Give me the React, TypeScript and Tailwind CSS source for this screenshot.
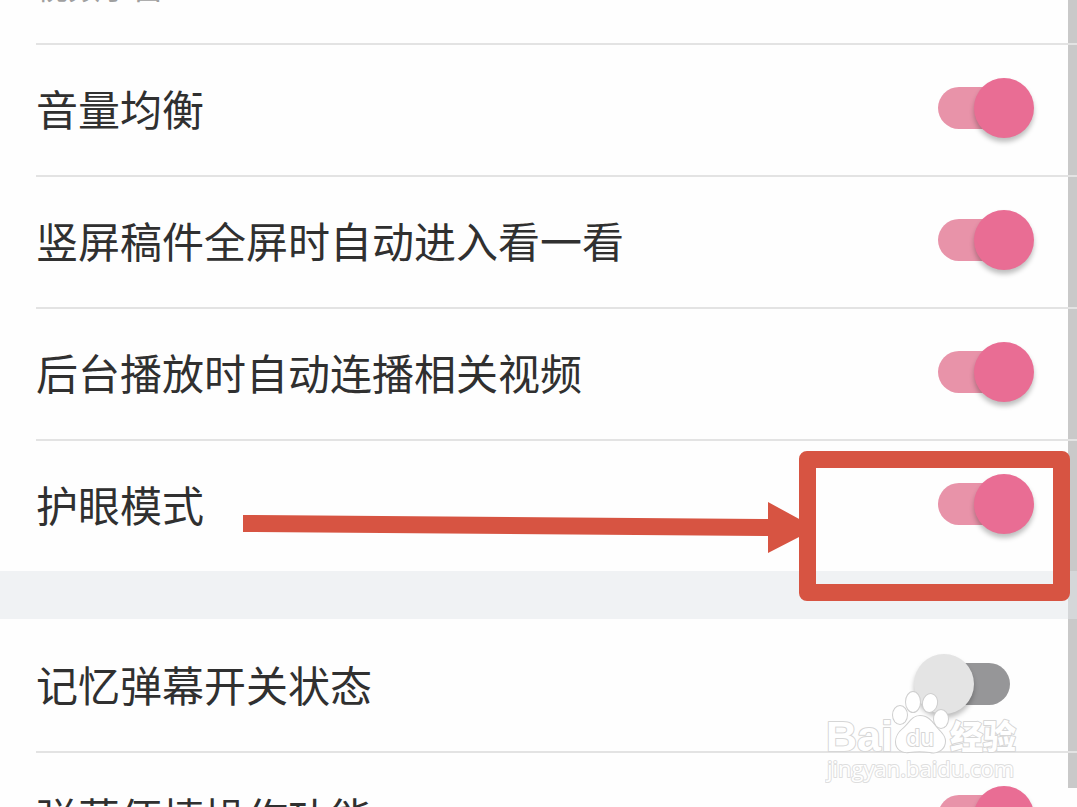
import React, { useState } from 'react';

interface SettingItem {
  id: string;
  label: string;
  defaultOn: boolean;
}

const playbackSettings: SettingItem[] = [
  { id: 'volume', label: '音量均衡', defaultOn: true },
  { id: 'portrait', label: '竖屏稿件全屏时自动进入看一看', defaultOn: true },
  { id: 'background', label: '后台播放时自动连播相关视频', defaultOn: true },
  { id: 'eye-care', label: '护眼模式', defaultOn: true },
];

const danmakuSettings: SettingItem[] = [
  { id: 'danmaku-memory', label: '记忆弹幕开关状态', defaultOn: false },
  { id: 'danmaku-actions', label: '弹幕便捷操作功能', defaultOn: true },
];

const Switch: React.FC<{ id: string; defaultOn: boolean }> = ({ id, defaultOn }) => {
  const [on, setOn] = useState(defaultOn);

  return (
    <input
      id={id}
      type="checkbox"
      role="switch"
      checked={on}
      onChange={(e) => setOn(e.target.checked)}
      className="relative h-16 w-[120px] shrink-0 cursor-pointer appearance-none before:absolute before:top-[9px] before:left-6 before:h-[42px] before:w-[72px] before:rounded-full before:bg-[#969698] before:content-[''] after:absolute after:top-0 after:left-0 after:size-[60px] after:rounded-full after:bg-[#e4e4e4] after:shadow-[0_4px_5px_rgba(0,0,0,0.25)] after:content-[''] checked:before:bg-[#e893a9] checked:after:left-[60px] checked:after:bg-[#e96d94]"
    />
  );
};

const SettingRow: React.FC<{ item: SettingItem; children?: React.ReactNode }> = ({ item, children }) => (
  <li className="relative ml-9 flex h-[132px] items-center justify-between border-b-2 border-[#e3e3e3] pr-[43px] last:h-[130px] last:border-b-0">
    <label htmlFor={item.id} className="pb-1 text-[42px] leading-[60px]">
      {item.label}
    </label>
    <Switch id={item.id} defaultOn={item.defaultOn} />
    {children}
  </li>
);

// Red arrow and frame pointing at the eye care switch
const Callout: React.FC = () => (
  <div className="pointer-events-none absolute top-[10px] right-[7px] left-[207px] flex items-center">
    <svg viewBox="0 0 560 54" preserveAspectRatio="none" className="h-[54px] min-w-0 flex-1" aria-hidden="true">
      <path d="M0 16 L525 20 L525 3 L558 21 L558 37 L525 54 L525 37 L0 33 Z" fill="#d75442" />
    </svg>
    <div className="-ml-1 h-[150px] w-[271px] rounded-lg border-[17px] border-[#d75442]" />
  </div>
);

const Watermark: React.FC = () => (
  <svg
    viewBox="0 0 200 100"
    className="pointer-events-none absolute top-[685px] right-[52px] h-[100px] w-[200px]"
    fill="#ffffff"
    stroke="#d6d6d6"
    strokeWidth="2"
    strokeLinejoin="round"
    paintOrder="stroke"
    aria-hidden="true"
  >
    <g stroke="#cfcfcf">
      <ellipse cx="75" cy="30" rx="7" ry="9" />
      <ellipse cx="88" cy="17" rx="7" ry="10" />
      <ellipse cx="105" cy="18" rx="7" ry="9" transform="rotate(12 105 18)" />
      <ellipse cx="116" cy="34" rx="7" ry="9" />
      <path d="M95 31 C87 31 84 39 79 43 C74 47 71 51 71 57 C71 64 77 68 84 67 C91 66 98 66 105 67 C113 69 120 64 120 56 C120 50 115 47 111 42 C107 37 103 31 95 31 Z" />
    </g>
    <text x="1" y="66" fontFamily="Liberation Sans, sans-serif" fontWeight="700" fontSize="43">Bai</text>
    <text x="81" y="61" fontFamily="Inter, sans-serif" fontWeight="500" fontSize="23">du</text>
    <text x="125" y="64" fontFamily="Noto Sans CJK SC, sans-serif" fontWeight="900" fontSize="33">经验</text>
    <text x="2" y="92" fontFamily="Open Sans, sans-serif" fontSize="22" stroke="#dedede">jingyan.baidu.com</text>
  </svg>
);

const App: React.FC = () => {
  return (
    <div className="relative isolate h-screen overflow-hidden bg-[#fefefe] font-['Noto_Sans_CJK_SC',sans-serif] text-[#303030]">
      <div className="absolute top-0 right-0 bottom-[19px] -z-10 w-[9px] bg-[#c9c9c9]" />

      <div className="ml-9 flex h-[45px] items-start overflow-hidden border-b-2 border-[#e3e3e3]">
        <p className="-mt-[37px] text-[32px] leading-[44px] text-[#a0a0a0]">视频小窗</p>
      </div>

      <ul>
        {playbackSettings.map((item) => (
          <SettingRow key={item.id} item={item}>
            {item.id === 'eye-care' && <Callout />}
          </SettingRow>
        ))}
      </ul>

      <div className="h-12 bg-[#e2e6ea]/50" />

      <ul className="pt-[2px]">
        {danmakuSettings.map((item) => (
          <SettingRow key={item.id} item={item} />
        ))}
      </ul>

      <Watermark />
    </div>
  );
};

export default App;
